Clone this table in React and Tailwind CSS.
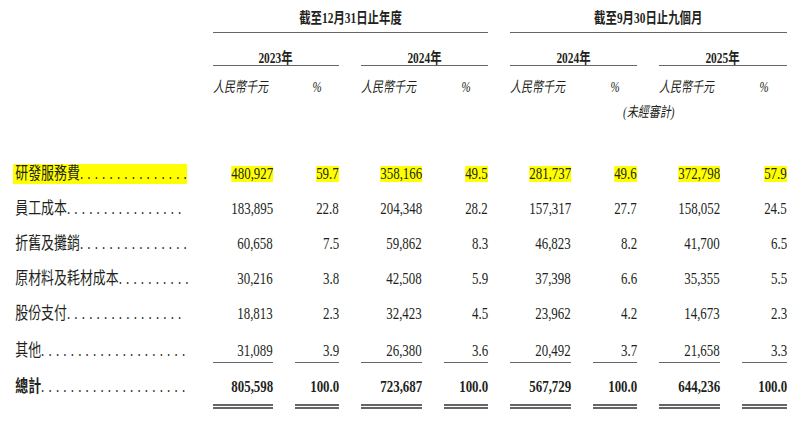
const ROWS = [
  { label: '研發服務費', values: ['480,927', '59.7', '358,166', '49.5', '281,737', '49.6', '372,798', '57.9'], highlight: true },
  { label: '員工成本', values: ['183,895', '22.8', '204,348', '28.2', '157,317', '27.7', '158,052', '24.5'] },
  { label: '折舊及攤銷', values: ['60,658', '7.5', '59,862', '8.3', '46,823', '8.2', '41,700', '6.5'] },
  { label: '原材料及耗材成本', values: ['30,216', '3.8', '42,508', '5.9', '37,398', '6.6', '35,355', '5.5'] },
  { label: '股份支付', values: ['18,813', '2.3', '32,423', '4.5', '23,962', '4.2', '14,673', '2.3'] },
];

const OTHER = { label: '其他', values: ['31,089', '3.9', '26,380', '3.6', '20,492', '3.7', '21,658', '3.3'] };
const TOTAL = { label: '總計', values: ['805,598', '100.0', '723,687', '100.0', '567,729', '100.0', '644,236', '100.0'] };

const YEARS = ['2023年', '2024年', '2024年', '2025年'];

const GRID = 'grid grid-cols-[178px_60px_44px_61px_44px_61px_44px_61px_45px] gap-x-[22px] pl-[13px]';

// label + dot leader, drawn wide then squeezed to the column like the printed table
function Label({ text, bold, highlight }) {
  // 17px glyphs, each dot advances 9.75px before the squeeze
  const dots = Math.floor((233.5 - 17 * text.length) / 9.75);
  return (
    <div
      className={`w-[234px] h-[20px] scale-x-[0.76] origin-left flex items-center pl-[3px] text-[17px] leading-[20px] ${
        highlight ? 'bg-[#ffff00]' : ''
      } ${bold ? 'font-bold' : ''}`}
    >
      <span className="whitespace-nowrap">{text}</span>
      <span className="ml-auto -mr-[5.5px] whitespace-nowrap tracking-[5.5px] font-normal">{'.'.repeat(dots)}</span>
    </div>
  );
}

function Num({ value, bold, highlight }) {
  return (
    <span
      className={`inline-block scale-x-[0.76] origin-right whitespace-nowrap text-[17px] leading-[16px] ${
        highlight ? 'bg-[#ffff00]' : ''
      } ${bold ? 'font-bold' : ''}`}
    >
      {value}
    </span>
  );
}

export default function App() {
  return (
    <div className="w-[800px] h-[422px] overflow-hidden bg-white text-[#231f20] font-['Liberation_Serif','Noto_Sans_CJK_TC',serif]">
      {/* period headers */}
      <div className={GRID}>
        <div />
        <div className="col-span-4 h-[33px] border-b-[1.5px] border-[#666] flex items-end justify-center pb-[5px]">
          <span className="inline-block scale-x-[0.76] whitespace-nowrap font-bold text-[15px] leading-[18px]">截至12月31日止年度</span>
        </div>
        <div className="col-span-4 h-[33px] border-b-[1.5px] border-[#666] flex items-end justify-center pb-[5px]">
          <span className="inline-block scale-x-[0.76] whitespace-nowrap font-bold text-[15px] leading-[18px]">截至9月30日止九個月</span>
        </div>
      </div>

      <div className={GRID}>
        <div />
        {YEARS.map((y, i) => (
          <div key={i} className="col-span-2 h-[33px] border-b-[1.5px] border-[#666] flex items-end justify-center">
            <span className="inline-block scale-x-[0.76] whitespace-nowrap font-bold text-[15px] leading-[14px]">{y}</span>
          </div>
        ))}
      </div>

      <div className={GRID}>
        <div />
        {YEARS.map((y, i) => (
          <div key={i} className="contents">
            <div className="h-[28px] pt-[9px]">
              <span className="inline-block scale-x-[0.76] origin-left whitespace-nowrap italic text-[14.5px] leading-[18px]">人民幣千元</span>
            </div>
            <div className="h-[28px] pt-[9px] text-center">
              <span className="inline-block scale-x-[0.76] italic text-[14.5px] leading-[18px]">%</span>
            </div>
          </div>
        ))}
      </div>

      <div className={GRID}>
        <div className="col-span-5" />
        <div className="col-span-4 h-[30px] pt-[6px] text-center">
          <span className="inline-block scale-x-[0.76] whitespace-nowrap italic text-[14.5px] leading-[18px]">(未經審計)</span>
        </div>
      </div>

      {/* body */}
      <div className="mt-[32px]">
        {ROWS.map((row) => (
          <div key={row.label} className={GRID}>
            <div className="h-[35px] flex items-center">
              <Label text={row.label} highlight={row.highlight} />
            </div>
            {row.values.map((v, i) => (
              <div key={i} className="h-[35px] flex items-center justify-end">
                <Num value={v} highlight={row.highlight} />
              </div>
            ))}
          </div>
        ))}

        <div className={GRID}>
          <div className="h-[32px] flex items-end pb-[1px] border-b-[1.5px] border-transparent">
            <Label text={OTHER.label} />
          </div>
          {OTHER.values.map((v, i) => (
            <div key={i} className="h-[32px] flex items-end justify-end pb-[3px] border-b-[1.5px] border-[#666]">
              <Num value={v} />
            </div>
          ))}
        </div>

        <div className={GRID}>
          <div className="h-[46px] flex items-end pb-[7px] border-b-[5px] border-transparent">
            <Label text={TOTAL.label} bold />
          </div>
          {TOTAL.values.map((v, i) => (
            <div key={i} className="h-[46px] flex items-end justify-end pb-[9px] border-b-[5px] border-double border-[#666]">
              <Num value={v} bold />
            </div>
          ))}
        </div>
      </div>
    </div>
  );
}
